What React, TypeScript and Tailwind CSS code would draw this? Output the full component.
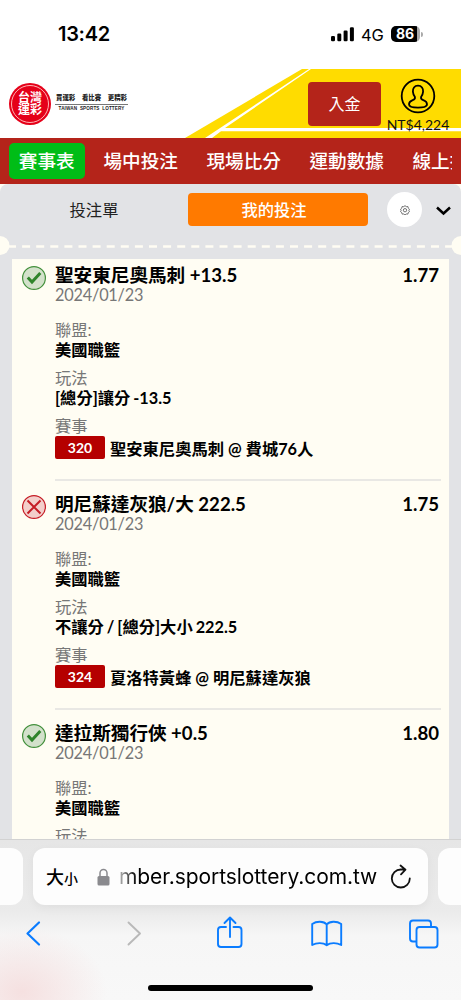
import { clsx } from "clsx";

const navItems = ["賽事表", "場中投注", "現場比分", "運動數據", "線上投注"];

const bets = [
  {
    won: true,
    title: "聖安東尼奧馬刺 +13.5",
    odds: "1.77",
    date: "2024/01/23",
    league: "美國職籃",
    play: "[總分]讓分 -13.5",
    code: "320",
    match: "聖安東尼奧馬刺 @ 費城76人",
  },
  {
    won: false,
    title: "明尼蘇達灰狼/大 222.5",
    odds: "1.75",
    date: "2024/01/23",
    league: "美國職籃",
    play: "不讓分 / [總分]大小 222.5",
    code: "324",
    match: "夏洛特黃蜂 @ 明尼蘇達灰狼",
  },
  {
    won: true,
    title: "達拉斯獨行俠 +0.5",
    odds: "1.80",
    date: "2024/01/23",
    league: "美國職籃",
    play: "",
    code: "",
    match: "",
  },
];

function StatusBar() {
  return (
    <div className="flex h-[69px] shrink-0 items-start bg-white font-['Inter','Liberation_Sans',sans-serif] text-black">
      <span className="ml-[58px] mt-[22px] w-[52px] text-[20px] font-semibold leading-[25px] tracking-[-0.3px]">13:42</span>
      <svg className="ml-[221px] mt-[27px]" width="24" height="15" viewBox="0 0 24 15">
        <rect x="0" y="9" width="4" height="5.3" rx="1.2" />
        <rect x="6.3" y="6.5" width="4" height="7.8" rx="1.2" />
        <rect x="12.6" y="3.5" width="4" height="10.8" rx="1.2" />
        <rect x="18.9" y="0.3" width="4" height="14" rx="1.2" />
      </svg>
      <span className="ml-[6px] mt-[25px] w-[23px] text-[16.5px] leading-5 tracking-[-0.2px]">4G</span>
      <div className="ml-[7px] mt-[26px] flex items-center">
        <span className="h-4 w-[29px] rounded-[5px] bg-linear-to-r from-black from-88% to-[#aaa] to-88% pr-[1px] text-center text-[14px] font-bold leading-4 text-white">
          86
        </span>
        <span className="ml-[1px] h-[5px] w-[2px] rounded-r-full bg-[#aaa]" />
      </div>
    </div>
  );
}

function Logo() {
  return (
    <div className="ml-[9px] mt-[14px] flex h-[42px] items-start">
      <div className="size-[42px] rounded-full bg-[#e50019] p-[2px]">
        <div className="flex size-full flex-col items-center justify-center rounded-full border border-[#ffb5b5] text-[12px] font-bold leading-[12.5px] text-white">
          <span>台灣</span>
          <span>運彩</span>
        </div>
      </div>
      <div className="ml-[4px] mt-[11px] w-[73px] text-center text-[#222]">
        <div className="flex justify-between border-b border-[#777] px-[1px] pb-[2px] text-[6.4px] font-black leading-[8px]">
          <span>買運彩</span>
          <span>看比賽</span>
          <span>更精彩</span>
        </div>
        <div className="mt-[1px] whitespace-nowrap font-['Liberation_Sans',sans-serif] text-[4.6px] font-bold leading-[6px] tracking-[0.12px]">
          TAIWAN&nbsp; SPORTS&nbsp; LOTTERY
        </div>
      </div>
    </div>
  );
}

function Header() {
  return (
    <div className="relative flex h-[69px] shrink-0 justify-between bg-white">
      <svg className="absolute inset-0" width="461" height="69" viewBox="0 0 461 69">
        <path d="M302 0H461V69H185Z" fill="#ffdc00" />
        <path d="M309 0H311L225 59H461V62.3H221L212 69H205Z" fill="#fff" />
      </svg>
      <div className="relative">
        <Logo />
      </div>
      <div className="relative flex">
        <button className="mt-[13px] h-11 w-[73px] rounded-[4px] bg-[#b4241a] text-[16px] leading-[44px] text-white">
          入金
        </button>
        <div className="ml-[5px] mr-[11px] flex w-[64px] flex-col items-center">
          <svg className="mt-[9px] shrink-0" width="36" height="36" viewBox="0 0 36 36" fill="none" stroke="#000" strokeWidth="1.8">
            <circle cx="18" cy="18" r="16.3" />
            <path d="M18 7.7c-3.7 0-5.3 2.8-5.1 6 .2 2.2.8 3.9 2 5.2.5 1.8-.5 2.6-2.2 3.2-2.3.8-3.7 1.8-3.7 4.2 0 2.5 4 3.4 9 3.4s9-.9 9-3.4c0-2.4-1.4-3.4-3.7-4.2-1.7-.6-2.7-1.4-2.2-3.2 1.2-1.3 1.8-3 2-5.2.2-3.2-1.4-6-5.1-6Z" />
          </svg>
          <span className="mt-[2px] text-[14px] leading-[18px] text-[#111]">NT$4,224</span>
        </div>
      </div>
    </div>
  );
}

function Nav() {
  return (
    <nav className="h-[46px] shrink-0 bg-[#b4241a] px-[9px]">
      <div className="flex h-full items-center overflow-hidden whitespace-nowrap text-[18.6px] font-medium text-white">
        {navItems.map((item, i) => (
          <span
            key={item}
            className={clsx(
              "shrink-0 leading-[36px]",
              i === 0 ? "mr-[19px] h-9 w-[75.5px] rounded-[5px] bg-[#00bd17] text-center" : "mr-[28.6px]",
            )}
          >
            {item}
          </span>
        ))}
      </div>
    </nav>
  );
}

function SlipTabs() {
  return (
    <div className="flex h-[43px] shrink-0 items-start rounded-t-[8px] bg-[#e2e3e6] pt-[9px]">
      <span className="w-[188px] text-center text-[16.3px] leading-[34px] text-[#222]">投注單</span>
      <span className="h-[33px] w-[180px] rounded-[4px] bg-[#ff7a00] pr-[8px] text-center text-[16.3px] font-medium leading-[34px] text-white">
        我的投注
      </span>
      <span className="ml-[19px] mt-[-1px] flex size-[35px] items-center justify-center rounded-full bg-white">
        <svg width="10" height="10" viewBox="0 0 24 24" fill="none" stroke="#555" strokeWidth="2">
          <path d="M12 1.5l3 2.5 3.9-.3.8 3.7 3 2.6-1.5 3 1.5 3-3 2.3-.8 3.5-3.9-.2-3 2.4-3-2.4-3.9.2-.8-3.5-3-2.3 1.5-3-1.5-3 3-2.6.8-3.7 3.9.3z" />
          <circle cx="12" cy="12.5" r="4" />
        </svg>
      </span>
      <svg className="ml-[13.5px] mt-[12.5px]" width="15" height="10" viewBox="0 0 15 10" fill="none" stroke="#000" strokeWidth="2.5">
        <path d="M1 1.5l6.5 6L14 1.5" />
      </svg>
    </div>
  );
}

// Torn ticket line with a notch on both edges
function Perforation() {
  return (
    <svg className="block shrink-0 bg-[#e2e3e6]" width="461" height="32" viewBox="0 0 461 32">
      <path d="M8 19.5H452" stroke="#fffdf3" strokeWidth="2.5" strokeDasharray="8 6.1" />
      <circle cx="0" cy="18.5" r="9.5" fill="#fffdf3" />
      <circle cx="461" cy="18.5" r="9.5" fill="#fffdf3" />
    </svg>
  );
}

function ResultIcon({ won }: { won: boolean }) {
  return (
    <svg className="block" width="24" height="24" viewBox="0 0 24 24" fill="none">
      <circle cx="12" cy="12" r="11.4" fill={won ? "#d3e1cb" : "#f3cfcb"} stroke={won ? "#43903c" : "#c51c25"} strokeWidth="1.2" />
      {won ? (
        <path d="M5.8 11.5L10 16L18.3 7" stroke="#2f842b" strokeWidth="3" />
      ) : (
        <path d="M5.5 5.5L18.5 18.5M18.5 5.5L5.5 18.5" stroke="#c51c25" strokeWidth="2" />
      )}
    </svg>
  );
}

function BetRow({ bet, last }: { bet: (typeof bets)[number]; last: boolean }) {
  return (
    <div className="flex h-[229px] shrink-0 pb-[7px] pl-[10px] pr-[8px] pt-[6px] leading-5">
      <div className="mt-[1px] w-[33px] shrink-0">
        <ResultIcon won={bet.won} />
      </div>
      <div className={clsx("flex grow flex-col whitespace-nowrap", !last && "border-b-2 border-[#e9e8e4]")}>
        <div className="flex justify-between pr-[2px] text-[18.6px] font-bold text-black">
          <span>{bet.title}</span>
          <span>{bet.odds}</span>
        </div>
        <span className="text-[16.3px] tracking-[-0.2px] text-[#777]">{bet.date}</span>
        <div className="mt-[15px] flex flex-col text-[16.3px] font-bold text-black">
          <span className="font-normal text-[#777]">聯盟:</span>
          <span>{bet.league}</span>
          <span className="mt-[8px] font-normal text-[#777]">玩法</span>
          <span className="[word-spacing:-1px]">{bet.play}</span>
          {bet.code && (
            <>
              <span className="mt-[8px] font-normal text-[#777]">賽事</span>
              <div className="flex items-center">
                <span className="h-[23px] w-[50px] rounded-[2px] bg-[#b50000] text-center text-[14px] leading-[24px] text-white">
                  {bet.code}
                </span>
                <span className="ml-[5px] pt-[2px]">{bet.match}</span>
              </div>
            </>
          )}
        </div>
      </div>
    </div>
  );
}

function SafariBar() {
  return (
    <div className="flex h-[161px] shrink-0 flex-col border-t border-[#d2d2d2] bg-[radial-gradient(ellipse_85px_65px_at_22px_152px,#f5e0e0,#f5e0e000),linear-gradient(#e6e6e6,#ebebeb_45%,#f6f6f6_60%,#f8f8f8)] font-['Inter','Liberation_Sans',sans-serif]">
      <div className="mt-[8px] flex h-[57px] shrink-0 gap-[10px]">
        <div className="w-[23px] shrink-0 rounded-r-[12px] bg-[#fdfdfd]" />
        <div className="flex w-[395px] shrink-0 items-center rounded-[12px] bg-[#fdfdfd] shadow-[0_3px_10px_rgba(0,0,0,0.05)]">
          <span className="ml-[13px] w-[33px] whitespace-nowrap font-['Noto_Sans_CJK_TC',sans-serif] text-[18px] font-medium leading-6 text-black">
            大<span className="text-[14px]">小</span>
          </span>
          <svg className="ml-[18px]" width="13" height="18" viewBox="0 0 13 18">
            <rect x="0.5" y="8" width="12" height="9.5" rx="1.5" fill="#8a8a8e" />
            <path d="M3 8.5V5a3.5 3.5 0 0 1 7 0v3.5" fill="none" stroke="#8a8a8e" strokeWidth="1.5" />
          </svg>
          <span className="ml-[9px] w-[260px] whitespace-nowrap bg-linear-to-r from-[#bbb] to-black to-8% bg-clip-text text-[21px] leading-7 tracking-[-0.08px] text-transparent">
            mber.sportslottery.com.tw
          </span>
          <svg className="ml-[11px]" width="22" height="26" viewBox="0 0 22 26" fill="none" stroke="#111" strokeWidth="1.8" strokeLinecap="round" strokeLinejoin="round">
            <path d="M19.8 14.500a9 9 0 1 1-9-9h4.500M10.500 1.500l5 4.200-4.500 4.600" />
          </svg>
        </div>
        <div className="w-[23px] shrink-0 rounded-l-[12px] bg-[#fdfdfd]" />
      </div>
      <svg className="shrink-0" width="461" height="44" viewBox="0 0 461 44" fill="none" stroke="#0a7cff" strokeWidth="1.9" strokeLinecap="round" strokeLinejoin="round">
        <path d="M39 17.5L27.5 28.5L39 39.5" strokeWidth="2.2" />
        <path d="M128.5 17.5L140 28.5L128.5 39.5" stroke="#b9b9b9" />
        <path d="M226 22h-5a3 3 0 0 0-3 3v14a3 3 0 0 0 3 3h17.500a3 3 0 0 0 3-3v-14a3 3 0 0 0-3-3h-5M230 32V13M224.500 18l5.500-5.500 5.500 5.500" />
        <path d="M326.7 19.5c-3-3.6-10-3.7-14.5-.5v21c4.5-2.5 11-2.5 14.5.3 3.5-2.8 10-2.8 14.5-.3v-21c-4.5-3.2-11.5-3.1-14.5.5v20.800" />
        <path d="M416 36.5h-3a3 3 0 0 1-3-3v-15a3 3 0 0 1 3-3h15a3 3 0 0 1 3 3v3" />
        <rect x="416.5" y="22" width="21" height="20.5" rx="3" />
      </svg>
      <div className="mt-[36px] h-[6px] w-[165px] shrink-0 self-center rounded-full bg-black" />
    </div>
  );
}

export default function App() {
  return (
    <div className="flex h-[1000px] w-[461px] flex-col overflow-hidden bg-[#fffdf3] font-['Lato','Noto_Sans_CJK_TC',sans-serif]">
      <StatusBar />
      <Header />
      <Nav />
      <SlipTabs />
      <Perforation />
      <div className="h-[580px] shrink-0 overflow-hidden bg-[#e2e3e6] px-3">
        <div className="flex flex-col bg-[#fffdf3]">
          {bets.map((bet, i) => (
            <BetRow key={bet.title} bet={bet} last={i === bets.length - 1} />
          ))}
        </div>
      </div>
      <SafariBar />
    </div>
  );
}
